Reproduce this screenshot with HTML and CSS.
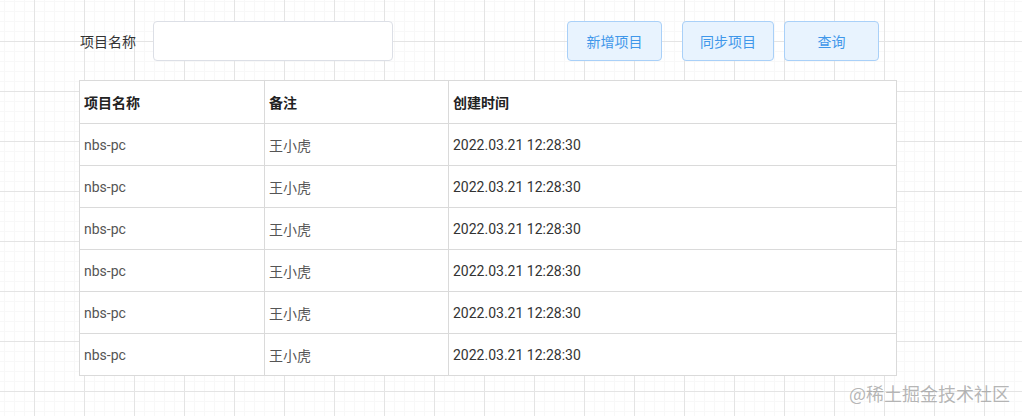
FILE: index.html
```html
<!DOCTYPE html>
<html lang="zh-CN">
<head>
    <meta charset="UTF-8">
    <meta name="viewport" content="width=device-width, initial-scale=1.0">
    <title>项目列表</title>
    <link rel="stylesheet" href="styles.css">
</head>
<body>
    <div class="page">
        <div class="toolbar">
            <label class="label" for="projectName">项目名称</label>
            <input type="text" id="projectName" class="input">
            <button class="btn btn-add">新增项目</button>
            <button class="btn btn-sync">同步项目</button>
            <button class="btn btn-query">查询</button>
        </div>
        <table class="list">
            <thead>
                <tr>
                    <th class="col-name">项目名称</th>
                    <th class="col-note">备注</th>
                    <th>创建时间</th>
                </tr>
            </thead>
            <tbody>
                <tr><td>nbs-pc</td><td>王小虎</td><td class="time">2022.03.21 12:28:30</td></tr>
                <tr><td>nbs-pc</td><td>王小虎</td><td class="time">2022.03.21 12:28:30</td></tr>
                <tr><td>nbs-pc</td><td>王小虎</td><td class="time">2022.03.21 12:28:30</td></tr>
                <tr><td>nbs-pc</td><td>王小虎</td><td class="time">2022.03.21 12:28:30</td></tr>
                <tr><td>nbs-pc</td><td>王小虎</td><td class="time">2022.03.21 12:28:30</td></tr>
                <tr><td>nbs-pc</td><td>王小虎</td><td class="time">2022.03.21 12:28:30</td></tr>
            </tbody>
        </table>
    </div>
    <div class="watermark">@稀土掘金技术社区</div>
</body>
</html>
```

FILE: styles.css
```css
html, body {
    height: 100%;
}
body {
    margin: 0;
    font-family: Roboto, "Noto Sans CJK SC", sans-serif;
    font-size: 14px;
    color: #333;
    background-color: #fff;
    background-image:
        linear-gradient(to right, #e4e4e4 1px, transparent 1px),
        linear-gradient(to bottom, #e4e4e4 1px, transparent 1px),
        linear-gradient(to right, #f8f8f8 1px, transparent 1px),
        linear-gradient(to bottom, #f8f8f8 1px, transparent 1px);
    background-size: 50px 50px, 50px 50px, 10px 10px, 10px 10px;
    background-position: 34px 41px, 34px 41px, 4px 1px, 4px 1px;
    overflow: hidden;
}
.page {
    padding: 21px 0 0 79px;
}
.toolbar {
    display: flex;
    align-items: center;
    height: 40px;
    margin-bottom: 19px;
}
.label {
    width: 74px;
    padding-left: 1px;
    box-sizing: border-box;
    color: #333;
}
.input {
    width: 240px;
    height: 40px;
    box-sizing: border-box;
    border: 1px solid #dcdfe6;
    border-radius: 4px;
    background: #fff;
    outline: none;
    padding: 0 12px;
}
.btn {
    height: 40px;
    box-sizing: border-box;
    background: #e8f3fe;
    border: 1px solid #a9d0f8;
    border-radius: 4px;
    color: #3f97ea;
    font-family: Roboto, "Noto Sans CJK SC", sans-serif;
    font-size: 14px;
    cursor: pointer;
}
.btn-add {
    width: 95px;
    margin-left: 174px;
}
.btn-sync {
    width: 92px;
    margin-left: 20px;
}
.btn-query {
    width: 95px;
    margin-left: 10px;
}
.list {
    width: 818px;
    border-collapse: collapse;
    background: #fff;
    table-layout: fixed;
}
.list th, .list td {
    border: 1px solid #dadada;
    height: 42px;
    padding: 0 4px;
    text-align: left;
    box-sizing: border-box;
}
.list th {
    height: 43px;
    font-weight: bold;
    color: #222;
}
.list td {
    color: #555;
}
.list td.time {
    color: #333;
}
.col-name {
    width: 185px;
}
.col-note {
    width: 184px;
}
.watermark {
    position: absolute;
    right: 12px;
    bottom: 10px;
    font-size: 18px;
    color: rgba(150, 150, 150, 0.7);
    font-family: "Noto Sans CJK SC", sans-serif;
}
```
